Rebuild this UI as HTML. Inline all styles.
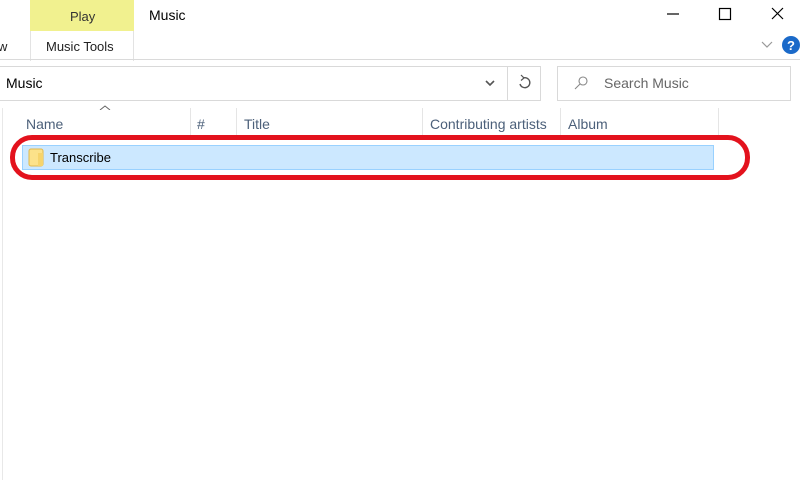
<!DOCTYPE html><html><head><style>
body{margin:0;width:800px;height:480px;background:#fff;position:relative;overflow:hidden;font-family:"Liberation Sans",sans-serif;color:#000}
.a{position:absolute}
.t{font-size:14px}
</style></head><body>
<div class="a" style="left:30px;top:0;width:104px;height:31px;background:#f1f18f"></div>
<div class="a t" style="left:70px;top:9px;color:#333;font-size:13px">Play</div>
<div class="a" style="left:30px;top:31px;width:104px;height:30px;border-left:1px solid #e3e3e3;border-right:1px solid #e3e3e3;box-sizing:border-box"></div>
<div class="a" style="left:46px;top:39px;font-size:13px;color:#222">Music Tools</div>
<div class="a" style="left:-2px;top:39px;font-size:13px;color:#222">w</div>
<div class="a" style="left:149px;top:7px;font-size:14px">Music</div>
<div class="a" style="left:0;top:59px;width:800px;height:1px;background:#dadada"></div>
<svg class="a" style="left:0;top:0" width="800" height="60">
<path d="M667 14h12" stroke="#000" stroke-width="1.2"/>
<rect x="719.5" y="8.5" width="11" height="11" fill="none" stroke="#000" stroke-width="1.2"/>
<path d="M772 8l11 11M783 8l-11 11" stroke="#000" stroke-width="1.2"/>
<path d="M762 42l5 5 5-5" fill="none" stroke="#999" stroke-width="1.2"/>
<circle cx="791" cy="45" r="9" fill="#1b6ac9"/>
<text x="791" y="50" font-size="13" font-weight="bold" fill="#fff" text-anchor="middle" font-family="Liberation Sans">?</text>
</svg>
<div class="a" style="left:-1px;top:66px;width:542px;height:35px;border:1px solid #d9d9d9;box-sizing:border-box"></div>
<div class="a" style="left:507px;top:66px;width:1px;height:35px;background:#d9d9d9"></div>
<div class="a" style="left:6px;top:75px;font-size:14px">Music</div>
<div class="a" style="left:557px;top:66px;width:234px;height:35px;border:1px solid #d9d9d9;box-sizing:border-box"></div>
<div class="a" style="left:604px;top:75px;font-size:14px;color:#666">Search Music</div>
<svg class="a" style="left:0;top:60" width="800" height="50">
<path d="M486 21l4 4 4-4" fill="none" stroke="#555" stroke-width="1.6"/>
<path d="M520 24a5 5 0 1 0 3-6" fill="none" stroke="#555" stroke-width="1.4"/><path d="M521 15l3 3-3 2.5" fill="none" stroke="#555" stroke-width="1.2"/>
<circle cx="583" cy="21" r="4" fill="none" stroke="#888" stroke-width="1.1"/><path d="M580 24l-5 5" stroke="#888" stroke-width="1.1"/>
<path d="M100 50l5-4 5 4" fill="none" stroke="#666" stroke-width="1"/>
</svg>
<div class="a" style="left:2px;top:108px;width:1px;height:372px;background:#e8e8e8"></div>
<div class="a" style="left:190px;top:108px;width:1px;height:27px;background:#e5e5e5"></div>
<div class="a" style="left:236px;top:108px;width:1px;height:27px;background:#e5e5e5"></div>
<div class="a" style="left:422px;top:108px;width:1px;height:27px;background:#e5e5e5"></div>
<div class="a" style="left:560px;top:108px;width:1px;height:27px;background:#e5e5e5"></div>
<div class="a" style="left:718px;top:108px;width:1px;height:27px;background:#e5e5e5"></div>
<div class="a t" style="left:26px;top:116px;color:#4c607a">Name</div>
<div class="a t" style="left:197px;top:116px;color:#4c607a">#</div>
<div class="a t" style="left:244px;top:116px;color:#4c607a">Title</div>
<div class="a t" style="left:430px;top:116px;color:#4c607a">Contributing artists</div>
<div class="a t" style="left:568px;top:116px;color:#4c607a">Album</div>
<div class="a" style="left:22px;top:145px;width:692px;height:25px;background:#cce8ff;border:1px solid #99d1ff;box-sizing:border-box"></div>
<svg class="a" style="left:28px;top:148px" width="16" height="19"><rect x="1" y="1" width="14" height="17" rx="2" fill="#fce28a" stroke="#e0b84e"/><rect x="10" y="5" width="5" height="13" fill="#f6d46c"/></svg>
<div class="a" style="left:50px;top:150px;font-size:13px">Transcribe</div>
<div class="a" style="left:10px;top:135px;width:740px;height:45px;border:5px solid #e3121d;border-radius:22px;box-sizing:border-box"></div>
</body></html>
